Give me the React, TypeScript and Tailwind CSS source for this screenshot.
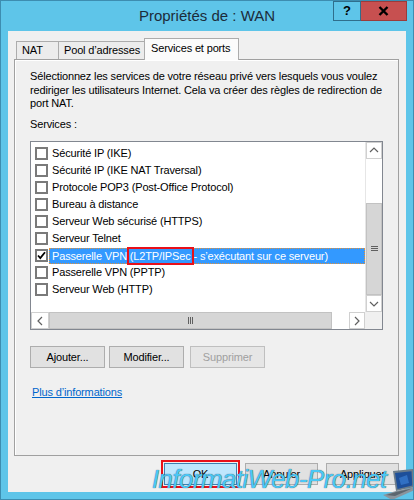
import React from 'react';

const services = [
  'Sécurité IP (IKE)',
  'Sécurité IP (IKE NAT Traversal)',
  'Protocole POP3 (Post-Office Protocol)',
  'Bureau à distance',
  'Serveur Web sécurisé (HTTPS)',
  'Serveur Telnet',
  'VPN',
  'Passerelle VPN (PPTP)',
  'Serveur Web (HTTP)',
];

function Check({ checked }: { checked?: boolean }) {
  return (
    <span className="w-[13px] h-[13px] border-2 border-[#7a7a7a] bg-white flex items-center justify-center shrink-0">
      {checked && (
        <svg width="9" height="9" viewBox="0 0 9 9">
          <path d="M1 4.5 L3.3 7 L8 1.2" stroke="#000" strokeWidth="1.8" fill="none" />
        </svg>
      )}
    </span>
  );
}

function Chevron({ dir }: { dir: 'up' | 'down' | 'left' | 'right' }) {
  const d = {
    up: 'M1 6 L5 2 L9 6',
    down: 'M1 2 L5 6 L9 2',
    left: 'M6 1 L2 5 L6 9',
    right: 'M2 1 L6 5 L2 9',
  }[dir];
  const vertical = dir === 'up' || dir === 'down';
  return (
    <svg width={vertical ? 10 : 8} height={vertical ? 8 : 10} viewBox={vertical ? '0 0 10 8' : '0 0 8 10'}>
      <path d={d} stroke="#606060" strokeWidth="1.2" fill="none" />
    </svg>
  );
}

function Btn({ label, disabled, wide }: { label: string; disabled?: boolean; wide?: boolean }) {
  return (
    <div
      className={`h-[22px] ${wide ? 'w-[73px]' : 'w-[75px]'} border flex items-center justify-center ${
        disabled ? 'text-[#a0a0a0] border-[#bfbfbf] bg-[#e6e6e6]' : 'text-black border-[#adadad] bg-[#e1e1e1]'
      }`}
    >
      {label}
    </div>
  );
}

export default function App() {
  return (
    <div className="w-[414px] h-[500px] bg-[#5ec5e9] border border-[#3d8db0] flex flex-col relative overflow-hidden font-['Liberation_Sans',Arial,sans-serif] text-[11px] tracking-[-0.15px] text-black">
      {/* title bar */}
      <div className="h-[30px] shrink-0 grid grid-cols-[1fr_auto_1fr]">
        <div />
        <div className="text-[15px] tracking-normal leading-[30px] text-[#1c2c3a]">Propriétés de : WAN</div>
        <div className="flex justify-end items-start pr-[6px]">
          <div className="w-[28px] h-[20px] border border-[#2f6e8c] flex items-center justify-center text-[13px] font-bold text-black">
            ?
          </div>
          <div className="w-[46px] h-[20px] bg-[#c75050] border border-[#9b3b3b] border-l-0 flex items-center justify-center">
            <svg width="11" height="10" viewBox="0 0 11 10">
              <path d="M1.5 1 L9.5 9 M9.5 1 L1.5 9" stroke="#000" strokeWidth="2.4" />
            </svg>
          </div>
        </div>
      </div>

      {/* client area */}
      <div className="mx-[7px] mb-[7px] flex-1 bg-[#f0f0f0] flex flex-col pl-[6px] pr-[7px] pt-[7px] pb-[7px]">
        {/* tabs */}
        <div className="h-[21px] flex items-end pl-[2px] shrink-0 relative z-10 whitespace-nowrap">
          <div className="w-[43px] h-[18px] border border-b-0 border-[#acacac] bg-[#ececec] pl-[5px] leading-[17px]">NAT</div>
          <div className="w-[87px] h-[18px] -ml-px border border-b-0 border-[#acacac] bg-[#ececec] pl-[5px] leading-[17px]">
            Pool d’adresses
          </div>
          <div className="w-[95px] h-[22px] -ml-px -mb-px border border-b-0 border-[#acacac] bg-[#fbfbfb] pl-[6px] leading-[19px]">
            Services et ports
          </div>
        </div>

        {/* panel */}
        <div className="flex-1 border border-[#a0a0a0] bg-[#f0f0f0] shadow-[inset_1px_1px_0_#ffffff] flex flex-col px-[15px] pt-[10px]">
          <p className="leading-[13.5px]">
            Sélectionnez les services de votre réseau privé vers lesquels vous voulez rediriger les utilisateurs Internet. Cela va créer des règles de redirection de port NAT.
          </p>
          <div className="leading-[13.5px] mt-[7px]">Services :</div>

          {/* list box */}
          <div className="mt-[10px] h-[189px] border border-[#828790] bg-white flex flex-col">
            <div className="flex-1 flex min-h-0">
              <div className="flex-1 flex flex-col pt-[3px] whitespace-nowrap">
                {services.map((s, i) => (
                  <div key={i} className="h-[17px] flex items-center pl-[4px]">
                    <Check checked={s === 'VPN'} />
                    {s === 'VPN' ? (
                      <span className="ml-px flex-1 h-[16px] bg-[#3399ff] text-white pl-[2px] leading-[14px] border border-dotted border-[#e0903a]">
                        Passerelle VPN{' '}
                        <span className="outline-2 outline-[#e8101a] outline-offset-[1px]">(L2TP/IPSec</span> - s’exécutant sur ce serveur)
                      </span>
                    ) : (
                      <span className="ml-px pl-[3px]">{s}</span>
                    )}
                  </div>
                ))}
              </div>
              {/* vertical scrollbar */}
              <div className="w-[17px] flex flex-col bg-white border-l border-[#e6e6e6]">
                <div className="h-[17px] flex items-center justify-center border border-[#d0d0d0] bg-white">
                  <Chevron dir="up" />
                </div>
                <div className="h-[44px] bg-white" />
                <div className="h-[93px] bg-[#d6d6d6] border border-[#c2c2c2] flex items-center justify-center">
                  <div className="flex flex-col gap-[1px]">
                    <div className="w-[7px] h-px bg-[#606060]" />
                    <div className="w-[7px] h-px bg-[#606060]" />
                    <div className="w-[7px] h-px bg-[#606060]" />
                  </div>
                </div>
                <div className="flex-1" />
                <div className="h-[17px] flex items-center justify-center border border-[#d0d0d0] bg-white">
                  <Chevron dir="down" />
                </div>
              </div>
            </div>
            {/* horizontal scrollbar */}
            <div className="h-[17px] flex shrink-0">
              <div className="w-[18px] flex items-center justify-center border border-[#d0d0d0] bg-white">
                <Chevron dir="left" />
              </div>
              <div className="flex-1 bg-[#d6d6d6] border border-[#c2c2c2] flex items-center justify-center">
                <div className="flex gap-[1px]">
                  <div className="w-px h-[7px] bg-[#606060]" />
                  <div className="w-px h-[7px] bg-[#606060]" />
                  <div className="w-px h-[7px] bg-[#606060]" />
                </div>
              </div>
              <div className="w-[17px] bg-white" />
              <div className="w-[16px] flex items-center justify-center border border-[#d0d0d0] bg-white">
                <Chevron dir="right" />
              </div>
              <div className="w-[17px] bg-[#f0f0f0]" />
            </div>
          </div>

          <div className="mt-[16px] flex">
            <Btn label="Ajouter..." />
            <div className="ml-[4px]">
              <Btn label="Modifier..." />
            </div>
            <div className="ml-[6px]">
              <Btn label="Supprimer" disabled />
            </div>
          </div>

          <div className="mt-[17px] pl-[2px] leading-[15px]">
            <span className="text-[#0066cc] underline">Plus d’informations</span>
          </div>
        </div>

        {/* dialog buttons */}
        <div className="mt-[7px] flex justify-end gap-[8px] shrink-0">
          <div className="h-[22px] w-[73px] border border-[#3c7fb1] bg-[#bee6fd] flex items-center justify-center outline-2 outline-[#e8101a] outline-offset-[1px]">
            OK
          </div>
          <Btn label="Annuler" wide />
          <Btn label="Appliquer" wide />
        </div>
      </div>

      {/* watermark */}
      <div className="absolute left-[151px] top-[465px] text-[26px] leading-none italic tracking-[-0.6px] text-[#4cc8f5] [text-shadow:0_0_1px_#1f3340] pointer-events-none">
        InformatiWeb-Pro.net
      </div>
      <svg className="absolute left-[382px] top-[468px]" width="32" height="32" viewBox="0 0 32 32">
        <path d="M10 2 L30 0 L31 18 L13 22 Z" fill="#6b7c8a" />
        <path d="M12 4 L28.5 2.2 L29.3 16.5 L14.5 20 Z" fill="#1d4f9a" />
        <path d="M16 9 L24 6 L26 14 L18 16 Z" fill="#3b7fd4" opacity="0.7" />
        <path d="M0 26 L13 22 L31 18 L32 21 L9 31 Z" fill="#8a949c" />
        <path d="M3 26 L13 23 L29 19.5 L12 27 Z" fill="#5c666e" />
      </svg>
    </div>
  );
}
